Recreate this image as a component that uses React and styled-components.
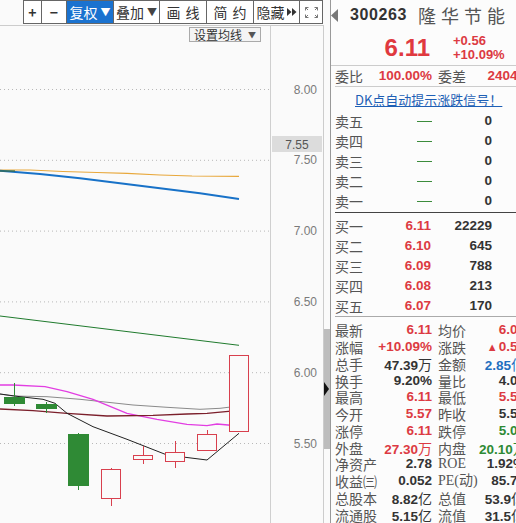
import React from 'react';
import styled, { createGlobalStyle } from 'styled-components';

const CJK = `"Noto Sans CJK SC", "Noto Sans", sans-serif`;
const NUM = `"Liberation Sans", "Noto Sans CJK SC", sans-serif`;
const RED = '#dc3a42';
const GREEN = '#2e8a34';
const BLUE = '#1f6fc0';
const DARK = '#333';

const Global = createGlobalStyle`
  html, body { margin: 0; padding: 0; background: #fafafa; }
  body { font-family: ${CJK}; }
`;

const Screen = styled.div`
  width: 516px;
  height: 523px;
  overflow: hidden;
  display: flex;
  background: #fafafa;
`;

/* ---------- left side ---------- */
const LeftCol = styled.div`
  width: 330px;
  flex-shrink: 0;
  display: flex;
  flex-direction: column;
`;

const ToolbarRow = styled.div`
  height: 25px;
  flex-shrink: 0;
  padding-left: 23px;
  box-sizing: border-box;
`;

const Toolbar = styled.div`
  display: flex;
  height: 24px;
  width: max-content;
  box-sizing: border-box;
  border: 1px solid #666;
  border-right: none;
  background: #fff;
`;

const ToolBtn = styled.div`
  width: ${p => p.$w}px;
  flex-shrink: 0;
  height: 100%;
  box-sizing: border-box;
  border-right: 1px solid #666;
  display: flex;
  align-items: center;
  justify-content: center;
  gap: 2px;
  white-space: nowrap;
  overflow: hidden;
  font-family: ${CJK};
  font-size: 14px;
  line-height: 1;
  color: ${p => (p.$active ? '#fff' : '#333')};
  background: ${p => (p.$active ? '#1a72cf' : '#fff')};
  font-weight: ${p => (p.$bold ? 700 : 400)};
  letter-spacing: ${p => (p.$spaced ? '5px' : '0')};
  padding-left: ${p => (p.$spaced ? '5px' : '0')};
`;

const Caret = styled.span`
  font-size: 10px;
  color: ${p => (p.$light ? '#fff' : '#444')};
  margin-left: 1px;
`;

const Body = styled.div`
  flex: 1;
  display: flex;
  min-height: 0;
`;

const ChartArea = styled.div`
  position: relative;
  width: 323px;
  border-top: 1px solid #ccc;
  overflow: hidden;
`;

const ChartSvg = styled.svg`
  display: block;
`;

const MaButton = styled.div`
  position: absolute;
  left: 189px;
  top: 1px;
  width: 72px;
  height: 15px;
  box-sizing: border-box;
  border: 1px solid #aaa;
  background: #f4f4f4;
  display: flex;
  align-items: center;
  justify-content: center;
  gap: 6px;
  font-family: ${CJK};
  font-size: 12px;
  color: #333;
  line-height: 1;
`;

const SmallCaret = styled.span`
  font-size: 8px;
  color: #555;
`;

const Strip = styled.div`
  width: 7px;
  box-sizing: border-box;
  border-left: 1px solid #ccc;
  display: flex;
  flex-direction: column;
`;

const Thumb = styled.div`
  position: relative;
  margin-top: 304px;
  height: 120px;
  background: #bdbdbd;
`;

const ThumbArrow = styled.svg`
  position: absolute;
  left: 0;
  top: 53px;
`;

/* ---------- right panel ---------- */
const Panel = styled.div`
  width: 186px;
  flex-shrink: 0;
  box-sizing: border-box;
  border-left: 1px solid #999;
  background: #fcfcfc;
  overflow: hidden;
`;

const PanelInner = styled.div`
  width: 200px;
  display: flex;
  flex-direction: column;
`;

const HeaderRow = styled.div`
  height: 30px;
  display: grid;
  grid-template-columns: 19px 68px auto;
  align-items: center;
`;

const Code = styled.span`
  font-family: ${NUM};
  font-weight: 700;
  font-size: 16px;
  letter-spacing: 0.6px;
  color: #333;
`;

const StockName = styled.span`
  font-family: ${CJK};
  font-size: 18px;
  letter-spacing: 5px;
  color: #555;
  white-space: nowrap;
`;

const PriceRow = styled.div`
  height: 35px;
  border-bottom: 1px solid #ccc;
  display: grid;
  grid-template-columns: 99px auto;
  column-gap: 23px;
  align-items: center;
`;

const BigPrice = styled.span`
  text-align: right;
  font-family: ${NUM};
  font-weight: 700;
  font-size: 24px;
  line-height: 24px;
  color: #e0393f;
`;

const Changes = styled.div`
  display: flex;
  flex-direction: column;
  font-family: ${NUM};
  font-weight: 700;
  font-size: 13px;
  line-height: 14px;
  color: ${RED};
`;

const InfoGrid = styled.div`
  margin-left: 4px;
  height: ${p => p.$h}px;
  display: grid;
  grid-template-columns: 43px 54px 47px 46px;
  align-items: center;
  border-bottom: ${p => (p.$border ? '1px solid #ccc' : 'none')};
`;

const Label = styled.span`
  font-family: ${p => (p.$serif ? `"Liberation Serif", "Noto Sans CJK SC", serif` : CJK)};
  font-size: 14px;
  line-height: 14px;
  height: 14px;
  color: #555;
  white-space: nowrap;
  padding-left: ${p => (p.$second ? '6px' : '0')};
`;

const Value = styled.span`
  text-align: right;
  font-family: ${NUM};
  font-weight: 700;
  font-size: 13.5px;
  line-height: 14px;
  height: 14px;
  white-space: nowrap;
  color: ${p => p.$c || DARK};
`;

const Unit = styled.span`
  font-family: ${CJK};
  font-weight: 400;
  font-size: 14px;
`;

const Tri = styled.span`
  font-size: 11px;
  margin-right: 1px;
  vertical-align: 0;
`;

const LinkRow = styled.div`
  height: 24px;
  display: flex;
  align-items: center;
  padding-left: 24px;
`;

const DkLink = styled.a`
  font-family: ${CJK};
  font-size: 13px;
  color: #1e5fb5;
  text-decoration: underline;
  white-space: nowrap;
`;

const OrderBlock = styled.div`
  margin-left: 4px;
  padding-top: ${p => p.$pt}px;
  padding-bottom: ${p => p.$pb}px;
  border-bottom: 1px solid ${p => p.$line};
`;

const OrderRow = styled.div`
  height: 20px;
  display: grid;
  grid-template-columns: 43px 53px 61px;
  align-items: center;
`;

const Dash = styled.span`
  justify-self: end;
  width: 15px;
  height: 1px;
  background: #3c8c3c;
  margin-right: -1px;
`;

const InfoBlock = styled.div`
  padding-top: 5px;
`;

/* ---------- chart data ---------- */
const yOf = p => 89 + (8 - p) * 141.6;
const gridPrices = [8.0, 7.5, 7.0, 6.5, 6.0, 5.5];

const pts = a => a.map(([x, y]) => `${x},${y}`).join(' ');

const lines = [
  { c: '#e8a83c', w: 1.2, p: [[0, 170], [30, 170], [63, 171.5], [97, 172.5], [127, 173.3], [160, 175], [192, 176], [239, 176.3]] },
  { c: '#1872c8', w: 2, p: [[0, 170.7], [40, 174], [80, 178.3], [120, 183.3], [160, 188.3], [200, 193.3], [239, 199]] },
  { c: '#3a6a3a', w: 1.2, p: [[0, 171], [15, 171]] },
  { c: '#1f7a2d', w: 1, p: [[0, 316], [239, 345.3]] },
  { c: '#8a8a8a', w: 1, p: [[0, 394], [13, 396], [47, 396.7], [80, 399.3], [133, 405], [167, 407.3], [200, 409.3], [220, 408.3], [239, 406]] },
  { c: '#e23ee2', w: 1.3, p: [[0, 385], [13, 385], [45, 386.7], [67, 391.7], [93, 399.3], [127, 413.3], [157, 419.3], [187, 424.3], [207, 425.7], [217, 424], [239, 426]] },
  { c: '#7b1f2b', w: 1.3, p: [[0, 409], [33, 410.7], [67, 413.3], [107, 416], [153, 415.3], [187, 414], [207, 413.3], [239, 410.3]] },
  { c: '#222', w: 1, p: [[0, 394], [20, 396.7], [43, 399.3], [55, 403.3], [67, 413.3], [93, 426.7], [127, 439.3], [167, 455], [207, 460], [239, 433.3]] },
];

const candles = [
  { x: 4, w: 21, top: 397, bot: 404, hi: 383, lo: 406, up: false },
  { x: 36, w: 21, top: 404, bot: 409, hi: 402, lo: 413, up: false },
  { x: 68, w: 21, top: 434, bot: 486, hi: 433, lo: 490, up: false },
  { x: 101, w: 20, top: 469, bot: 498, hi: 468, lo: 506, up: true },
  { x: 133, w: 20, top: 455, bot: 459, hi: 446, lo: 464, up: true },
  { x: 165, w: 20, top: 452, bot: 461, hi: 441, lo: 468, up: true },
  { x: 197, w: 20, top: 434, bot: 450, hi: 430, lo: 450, up: true },
  { x: 229, w: 20, top: 355, bot: 431, hi: 355, lo: 431, up: true },
];

const Chart = () => (
  <ChartSvg width="323" height="497" viewBox="0 26 323 497">
    <line x1="270.5" y1="26" x2="270.5" y2="523" stroke="#cfcfcf" />
    {gridPrices.map(p => (
      <g key={p}>
        <line x1="0" y1={yOf(p) + 0.5} x2="270" y2={yOf(p) + 0.5} stroke="#b8b8b8" strokeDasharray="1 3" />
        <text x="317" y={yOf(p) + 4.5} textAnchor="end" fontFamily="Liberation Sans, sans-serif" fontSize="12" fill="#7a7a7a">
          {p.toFixed(2)}
        </text>
      </g>
    ))}
    <rect x="272" y="136" width="50" height="16" fill="#dcdcdc" />
    <text x="297" y="148.5" textAnchor="middle" fontFamily="Liberation Sans, sans-serif" fontSize="12" fill="#555">7.55</text>
    {lines.map((l, i) => (
      <polyline key={i} points={pts(l.p)} fill="none" stroke={l.c} strokeWidth={l.w} />
    ))}
    {candles.map((c, i) => {
      const col = c.up ? '#d8404e' : '#2f8a35';
      const cx = c.x + Math.floor(c.w / 2) + 0.5;
      return (
        <g key={i}>
          {c.hi < c.top && <line x1={cx} y1={c.hi} x2={cx} y2={c.top} stroke={col} />}
          {c.lo > c.bot && <line x1={cx} y1={c.bot} x2={cx} y2={c.lo} stroke={col} />}
          {c.up ? (
            <rect x={c.x + 0.5} y={c.top + 0.5} width={c.w - 1} height={c.bot - c.top} fill="#fafafa" stroke={col} />
          ) : (
            <rect x={c.x} y={c.top} width={c.w} height={c.bot - c.top} fill={col} />
          )}
        </g>
      );
    })}
  </ChartSvg>
);

const FullIcon = () => (
  <svg width="13" height="11" viewBox="0 0 13 11" fill="none" stroke="#777" strokeWidth="1">
    <path d="M0.5 3.5V0.5H3.5M0.5 0.5L3 3" />
    <path d="M12.5 3.5V0.5H9.5M12.5 0.5L10 3" />
    <path d="M0.5 7.5V10.5H3.5M0.5 10.5L3 8" />
    <path d="M12.5 7.5V10.5H9.5M12.5 10.5L10 8" />
  </svg>
);

const DoubleTri = () => (
  <svg width="10" height="8" viewBox="0 0 10 8">
    <path d="M0 0L4.5 4L0 8Z M5 0L9.5 4L5 8Z" fill="#333" />
  </svg>
);

const sells = ['卖五', '卖四', '卖三', '卖二', '卖一'];
const buys = [
  ['买一', '6.11', '22229'],
  ['买二', '6.10', '645'],
  ['买三', '6.09', '788'],
  ['买四', '6.08', '213'],
  ['买五', '6.07', '170'],
];

const info = [
  ['最新', '6.11', RED, '均价', '6.03', RED],
  ['涨幅', '+10.09%', RED, '涨跌', <><Tri>▲</Tri>0.56</>, RED],
  ['总手', <>47.39<Unit>万</Unit></>, DARK, '金额', <>2.85<Unit>亿</Unit></>, BLUE],
  ['换手', '9.20%', DARK, '量比', '4.05', DARK],
  ['最高', '6.11', RED, '最低', '5.57', RED],
  ['今开', '5.57', RED, '昨收', '5.55', DARK],
  ['涨停', '6.11', RED, '跌停', '5.00', GREEN],
  ['外盘', <>27.30<Unit>万</Unit></>, RED, '内盘', <>20.10<Unit>万</Unit></>, GREEN],
  ['净资产', '2.78', DARK, 'ROE', '1.92%', DARK, true],
  ['收益㈢', '0.052', DARK, 'PE(动)', '85.73', DARK, true],
  ['总股本', <>8.82<Unit>亿</Unit></>, DARK, '总值', <>53.9<Unit>亿</Unit></>, DARK],
  ['流通股', <>5.15<Unit>亿</Unit></>, DARK, '流值', <>31.5<Unit>亿</Unit></>, DARK],
];

export default function App() {
  return (
    <>
      <Global />
      <Screen>
        <LeftCol>
          <ToolbarRow>
            <Toolbar>
              <ToolBtn $w={18} $bold>+</ToolBtn>
              <ToolBtn $w={25} $bold>−</ToolBtn>
              <ToolBtn $w={47} $active>复权<Caret $light>▼</Caret></ToolBtn>
              <ToolBtn $w={46}>叠加<Caret>▼</Caret></ToolBtn>
              <ToolBtn $w={47} $spaced>画线</ToolBtn>
              <ToolBtn $w={47} $spaced>简约</ToolBtn>
              <ToolBtn $w={46}>隐藏<DoubleTri /></ToolBtn>
              <ToolBtn $w={23}><FullIcon /></ToolBtn>
            </Toolbar>
          </ToolbarRow>
          <Body>
            <ChartArea>
              <Chart />
              <MaButton>设置均线<SmallCaret>▼</SmallCaret></MaButton>
            </ChartArea>
            <Strip>
              <Thumb>
                <ThumbArrow width="5" height="14" viewBox="0 0 5 14">
                  <path d="M0 0L5 7L0 14Z" fill="#111" />
                </ThumbArrow>
              </Thumb>
            </Strip>
          </Body>
        </LeftCol>

        <Panel>
          <PanelInner>
            <HeaderRow>
              <svg width="8" height="13" viewBox="0 0 8 13">
                <path d="M7 0L0 6.5L7 13Z" fill="#777" />
              </svg>
              <Code>300263</Code>
              <StockName>隆华节能</StockName>
            </HeaderRow>
            <PriceRow>
              <BigPrice>6.11</BigPrice>
              <Changes>
                <span>+0.56</span>
                <span>+10.09%</span>
              </Changes>
            </PriceRow>
            <InfoGrid $h={20} $border>
              <Label>委比</Label>
              <Value $c={RED}>100.00%</Value>
              <Label $second>委差</Label>
              <Value $c={RED}>24042</Value>
            </InfoGrid>
            <LinkRow>
              <DkLink>DK点自动提示涨跌信号！</DkLink>
            </LinkRow>
            <OrderBlock $pt={0} $pb={1} $line="#444">
              {sells.map(s => (
                <OrderRow key={s}>
                  <Label>{s}</Label>
                  <Dash />
                  <Value>0</Value>
                </OrderRow>
              ))}
            </OrderBlock>
            <OrderBlock $pt={3} $pb={0} $line="#aaa">
              {buys.map(([l, p, q]) => (
                <OrderRow key={l}>
                  <Label>{l}</Label>
                  <Value $c={RED}>{p}</Value>
                  <Value>{q}</Value>
                </OrderRow>
              ))}
            </OrderBlock>
            <InfoBlock>
              {info.map(([l1, v1, c1, l2, v2, c2, serif], i) => (
                <InfoGrid key={i} $h={16.75}>
                  <Label>{l1}</Label>
                  <Value $c={c1}>{v1}</Value>
                  <Label $second $serif={serif}>{l2}</Label>
                  <Value $c={c2}>{v2}</Value>
                </InfoGrid>
              ))}
            </InfoBlock>
          </PanelInner>
        </Panel>
      </Screen>
    </>
  );
}
